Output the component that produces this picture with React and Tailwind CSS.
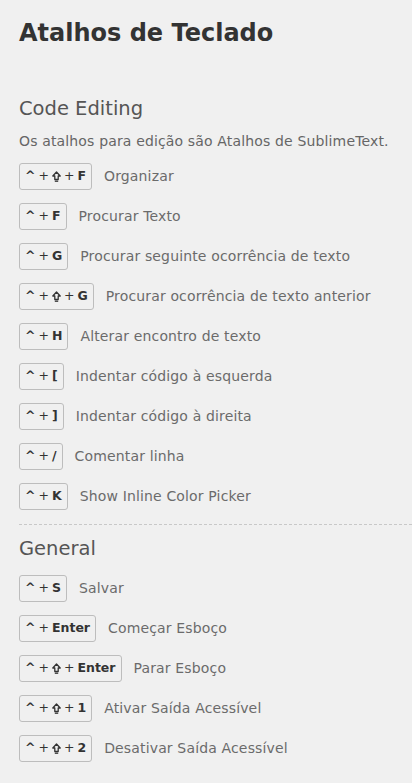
import React from 'react';

const codeEditing = [
  { keys: ['^', 'shift', 'F'], label: 'Organizar' },
  { keys: ['^', 'F'], label: 'Procurar Texto' },
  { keys: ['^', 'G'], label: 'Procurar seguinte ocorrência de texto' },
  { keys: ['^', 'shift', 'G'], label: 'Procurar ocorrência de texto anterior' },
  { keys: ['^', 'H'], label: 'Alterar encontro de texto' },
  { keys: ['^', '['], label: 'Indentar código à esquerda' },
  { keys: ['^', ']'], label: 'Indentar código à direita' },
  { keys: ['^', '/'], label: 'Comentar linha' },
  { keys: ['^', 'K'], label: 'Show Inline Color Picker' },
];

const general = [
  { keys: ['^', 'S'], label: 'Salvar' },
  { keys: ['^', 'Enter'], label: 'Começar Esboço' },
  { keys: ['^', 'shift', 'Enter'], label: 'Parar Esboço' },
  { keys: ['^', 'shift', '1'], label: 'Ativar Saída Acessível' },
  { keys: ['^', 'shift', '2'], label: 'Desativar Saída Acessível' },
];

// little outlined up-arrow used for the shift key
function ShiftIcon() {
  return (
    <svg width="9" height="11" viewBox="0 0 9 11" className="inline-block">
      <path
        d="M4.5 1 L8.2 5 L6.2 5 L6.2 8.5 L2.8 8.5 L2.8 5 L0.8 5 Z"
        fill="none"
        stroke="#333"
        strokeWidth="1.3"
        strokeLinejoin="round"
      />
      <path d="M2.8 10.2 H6.2" stroke="#333" strokeWidth="1.3" />
    </svg>
  );
}

function Shortcut({ keys, label }) {
  return (
    <li className="flex items-center gap-[12px]">
      <kbd className="flex h-[27px] items-center gap-[3px] rounded-[3px] border border-[#bdbdbd] px-[5px] font-['DejaVu_Sans',sans-serif] text-[12.5px] font-bold text-[#333]">
        {keys.map((k, i) => (
          <React.Fragment key={i}>
            {i > 0 && <span className="font-normal">+</span>}
            {k === 'shift' ? <ShiftIcon /> : <span>{k}</span>}
          </React.Fragment>
        ))}
      </kbd>
      <span className="text-[14px] tracking-[0.15px] text-[#6b6b6b]">{label}</span>
    </li>
  );
}

export default function App() {
  return (
    <div className="min-h-[783px] w-[412px] bg-[#f0f0f0] pl-[19px] font-['DejaVu_Sans',sans-serif]">
      <h1 className="pt-[17px] text-[24px] leading-[32px] font-bold text-[#333]">
        Atalhos de Teclado
      </h1>

      {/* Code Editing section */}
      <section className="pt-[48px]">
        <h2 className="text-[19.5px] leading-[24px] text-[#555]">Code Editing</h2>
        <p className="mt-[11px] text-[14px] leading-[18px] tracking-[0.15px] text-[#666]">
          Os atalhos para edição são Atalhos de SublimeText.
        </p>
        <ul className="mt-[13px] flex flex-col gap-[13px]">
          {codeEditing.map((s) => (
            <Shortcut key={s.label} {...s} />
          ))}
        </ul>
      </section>

      <div className="mt-[14px] border-t border-dashed border-[#c8c8c8]" />

      {/* General section */}
      <section className="pt-[12px]">
        <h2 className="text-[19.5px] leading-[24px] text-[#555]">General</h2>
        <ul className="mt-[14px] flex flex-col gap-[13px]">
          {general.map((s) => (
            <Shortcut key={s.label} {...s} />
          ))}
        </ul>
      </section>
    </div>
  );
}
